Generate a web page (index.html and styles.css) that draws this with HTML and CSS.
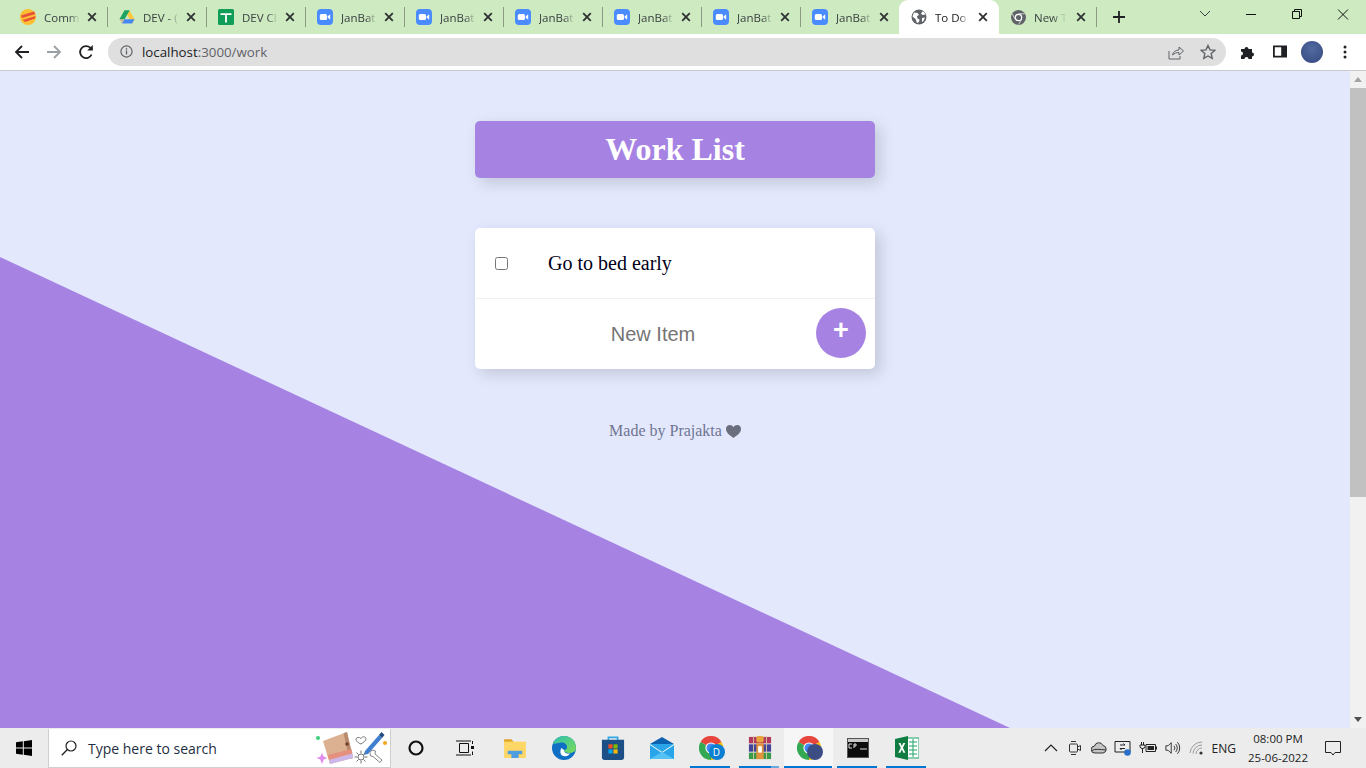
FILE: index.html
```html
<!DOCTYPE html>
<html lang="en">
<head>
<meta charset="utf-8">
<title>To Do List</title>
<link rel="stylesheet" href="styles.css">
</head>
<body>
<svg class="defs" width="0" height="0" aria-hidden="true">
  <symbol id="zoom" viewBox="0 0 16 16">
    <rect width="16" height="16" rx="4" fill="#4a8cff"/>
    <rect x="2.8" y="5" width="7.2" height="6" rx="1.5" fill="#fff"/>
    <path d="M10.6 7.4 13.2 5.3v5.4l-2.6-2.1z" fill="#fff"/>
  </symbol>
  <symbol id="x" viewBox="0 0 10 10">
    <path d="M1.2 1.2 8.8 8.8M8.8 1.2 1.2 8.8" stroke="#2f3133" stroke-width="1.8" fill="none"/>
  </symbol>
  <symbol id="chrome" viewBox="0 0 32 32">
    <path d="M16 16 2.1 8A16 16 0 0 1 29.9 8z" fill="#e8453c"/>
    <path d="M16 16 2.1 8A16 16 0 0 0 16 32z" fill="#34a853"/>
    <path d="M16 16 16 32A16 16 0 0 0 29.9 8z" fill="#fbbc05"/>
    <circle cx="16" cy="16" r="7.5" fill="#fff"/>
    <circle cx="16" cy="16" r="6" fill="#4285f4"/>
  </symbol>
</svg>

<div class="window">
  <header class="tabstrip">
    <div class="tab">
      <svg class="fav" viewBox="0 0 16 16"><circle cx="8" cy="8" r="8" fill="#fbbf33"/><path d="M1 6.5 14 2.5l1.4 2.6L2 9z" fill="#e8503a"/><path d="M2.6 11 15.6 7l-.6 2.6L5 13z" fill="#e8503a"/></svg>
      <span class="tab-title">Comm</span>
      <svg class="tab-x"><use href="#x"/></svg>
      <i class="tab-sep"></i>
    </div>
    <div class="tab">
      <svg class="fav" viewBox="0 0 16 16"><path d="M5.4 1.5h5.2L5.6 10.3H0.4z" fill="#1ea362"/><path d="M10.6 1.5 15.6 10.3l-2.6 4.3L8 5.8z" fill="#ffc93f"/><path d="M3 14.6 5.6 10.3h10L13 14.6z" fill="#4587f4"/><path d="M5.4 1.5h5.2L8 5.8z" fill="#1ea362"/><path d="M0.4 10.3h5.2L3 14.6z" fill="#e0402f" opacity=".25"/></svg>
      <span class="tab-title">DEV - (</span>
      <svg class="tab-x"><use href="#x"/></svg>
      <i class="tab-sep"></i>
    </div>
    <div class="tab">
      <svg class="fav" viewBox="0 0 16 16"><rect width="16" height="16" rx="1.5" fill="#0f9d58"/><path d="M2.500 4.200h11v1.700H8.900v7.600H7.100V5.900H2.500z" fill="#fff"/></svg>
      <span class="tab-title">DEV Cl</span>
      <svg class="tab-x"><use href="#x"/></svg>
      <i class="tab-sep"></i>
    </div>
    <div class="tab"><svg class="fav"><use href="#zoom"/></svg><span class="tab-title">JanBat</span><svg class="tab-x"><use href="#x"/></svg><i class="tab-sep"></i></div>
    <div class="tab"><svg class="fav"><use href="#zoom"/></svg><span class="tab-title">JanBat</span><svg class="tab-x"><use href="#x"/></svg><i class="tab-sep"></i></div>
    <div class="tab"><svg class="fav"><use href="#zoom"/></svg><span class="tab-title">JanBat</span><svg class="tab-x"><use href="#x"/></svg><i class="tab-sep"></i></div>
    <div class="tab"><svg class="fav"><use href="#zoom"/></svg><span class="tab-title">JanBat</span><svg class="tab-x"><use href="#x"/></svg><i class="tab-sep"></i></div>
    <div class="tab"><svg class="fav"><use href="#zoom"/></svg><span class="tab-title">JanBat</span><svg class="tab-x"><use href="#x"/></svg><i class="tab-sep"></i></div>
    <div class="tab"><svg class="fav"><use href="#zoom"/></svg><span class="tab-title">JanBat</span><svg class="tab-x"><use href="#x"/></svg></div>
    <div class="tab tab-active">
      <svg class="fav" viewBox="0 0 16 16"><circle cx="8" cy="8" r="7.5" fill="#5f6368"/><path d="M3 3.5 6.5 4 8 6 6 7 6.5 9.5 8.5 10.5 8 13 6 14 4.5 10 1.5 7.5zM9.5 1.5l2 1L10 4.5 11.5 6l3-.5L13 3zM11 9l3-.5-1.5 3.5L11 13z" fill="#fff"/></svg>
      <span class="tab-title">To Do</span>
      <svg class="tab-x"><use href="#x"/></svg>
    </div>
    <div class="tab tab-new">
      <svg class="fav" viewBox="0 0 32 32"><circle cx="16" cy="16" r="16" fill="#5f6368"/><circle cx="16" cy="16" r="8" fill="#fff"/><circle cx="16" cy="16" r="5.5" fill="#5f6368"/><path d="M16 8h13M9 20 2.5 8M22.5 20 16 31" stroke="#fff" stroke-width="1.5"/></svg>
      <span class="tab-title">New Ta</span>
      <svg class="tab-x"><use href="#x"/></svg>
      <i class="tab-sep"></i>
    </div>
    <svg class="newtab" viewBox="0 0 12 12"><path d="M6 0v12M0 6h12" stroke="#202124" stroke-width="1.8"/></svg>
    <div class="winctrls">
      <svg class="winbtn" viewBox="0 0 46 34"><path d="m18 11 5 5 5-5" stroke="#3c4043" fill="none" stroke-width="1"/></svg>
      <svg class="winbtn" viewBox="0 0 46 34"><path d="M18 14.500h10" stroke="#111" fill="none"/></svg>
      <svg class="winbtn" viewBox="0 0 46 34"><path d="M18.500 11.500h7v7h-7zM20.500 11.500v-2h7v7h-2" stroke="#111" fill="none"/></svg>
      <svg class="winbtn" viewBox="0 0 46 34"><path d="m18 9.500 10 10m0-10-10 10" stroke="#111" fill="none"/></svg>
    </div>
  </header>

  <nav class="toolbar">
    <svg class="navbtn" viewBox="0 0 16 16"><path d="M15 8H2M8 2 2 8l6 6" stroke="#202124" stroke-width="1.8" fill="none"/></svg>
    <svg class="navbtn" viewBox="0 0 16 16"><path d="M1 8h13M8 2l6 6-6 6" stroke="#9aa0a6" stroke-width="1.8" fill="none"/></svg>
    <svg class="navbtn" viewBox="0 0 16 16"><path d="M13.600 10.500A6 6 0 1 1 12.200 3.700L14 5.500" stroke="#202124" stroke-width="1.800" fill="none"/><path d="M14.800 1v5.600H9.200z" fill="#202124"/></svg>
    <div class="omnibox">
      <svg class="omni-info" viewBox="0 0 14 14"><circle cx="7" cy="7" r="6" stroke="#5f6368" stroke-width="1.300" fill="none"/><path d="M7 6v4.200M7 3.600v1.400" stroke="#5f6368" stroke-width="1.400"/></svg>
      <span class="url">localhost<span class="url-rest">:3000/work</span></span>
      <svg class="omni-action" viewBox="0 0 16 16"><path d="M1 7v8h11v-3" stroke="#5f6368" fill="none"/><path d="M4.500 11c.7-3.500 3.500-5 6.500-5V3l4.500 4-4.500 4V8.500C8.500 8.500 6.500 9.200 4.500 11z" stroke="#5f6368" fill="none"/></svg>
      <svg class="omni-action" viewBox="0 0 16 16"><path d="m8 1.500 2 4.400 4.800.5-3.600 3.200 1 4.700L8 12l-4.200 2.300 1-4.700-3.600-3.200 4.800-.5z" stroke="#5f6368" stroke-width="1.400" fill="none"/></svg>
    </div>
    <svg class="ext" viewBox="0 0 16 16"><path d="M1 5h3.500a2 2 0 1 1 4 0H12v3.500a2 2 0 1 1 0 4V15H8.500a2 2 0 1 0-4 0H1v-3.500a2 2 0 1 0 0-4z" fill="#202124"/></svg>
    <svg class="side" viewBox="0 0 14 12"><path fill-rule="evenodd" d="M0 0h14v12H0zM1.800 1.800v8.400h6.400V1.800z" fill="#202124"/></svg>
    <span class="avatar"></span>
    <svg class="kebab" viewBox="0 0 4 14"><circle cx="2" cy="2" r="1.500"/><circle cx="2" cy="7" r="1.500"/><circle cx="2" cy="12" r="1.500"/></svg>
  </nav>

  <div class="viewport">
    <main class="page">
      <div class="wedge"></div>
      <div class="heading"><h1>Work List</h1></div>
      <section class="card">
        <div class="item">
          <input class="check" type="checkbox">
          <p>Go to bed early</p>
        </div>
        <form class="add">
          <input class="add-input" type="text" placeholder="New Item">
          <button class="add-btn" type="button">+</button>
        </form>
      </section>
      <footer class="credit">Made by Prajakta <svg class="heart" viewBox="0 0 14 12"><path d="M7 12C3 9 0 7 0 3.600 0 1.500 1.600 0 3.500 0 5 0 6.300.8 7 2 7.700.8 9 0 10.500 0 12.400 0 14 1.500 14 3.600 14 7 11 9 7 12z" fill="#6b6e7c"/></svg></footer>
    </main>
    <aside class="scrollbar">
      <svg class="sb-arrow" viewBox="0 0 16 17"><path d="m4 11 4-5 4 5z" fill="#a3a3a3"/></svg>
      <div class="sb-thumb"></div>
      <svg class="sb-arrow sb-arrow-end" viewBox="0 0 16 17"><path d="m4 6 4 5 4-5z" fill="#505050"/></svg>
    </aside>
  </div>

  <footer class="taskbar">
    <div class="start"><svg class="winlogo" viewBox="0 0 16 16"><path d="M0 2.300 6.800 1.300v6.200H0zM7.800 1.200 16 0v7.500H7.800zM0 8.500h6.800v6.200L0 13.700zM7.800 8.500H16V16l-8.200-1.200z" fill="#000"/></svg></div>
    <div class="search">
      <svg class="search-ico" viewBox="0 0 16 16"><circle cx="10" cy="6" r="5" stroke="#222" stroke-width="1.200" fill="none"/><path d="M6.400 9.600.8 15.200" stroke="#222" stroke-width="1.400"/></svg>
      <span class="search-text">Type here to search</span>
      <svg class="sticker" viewBox="0 0 72 36">
        <circle cx="2" cy="8" r="2" fill="#3ecf7a"/>
        <path d="m6 23 1.800 3.800 3.700 1.200-3.700 1.500L6 34l-1.800-4.500L.5 28l3.700-1.200z" fill="#e58cf0"/>
        <path d="M7 11 31 2l6 26-23 6z" fill="#dcb191"/>
        <path d="M27.500 3.300 31 2l6 26-3.500.9z" fill="#b98a6d"/>
        <path d="m11.700 25 23.800-6 1 4.500L13 30z" fill="#e58f7e"/>
        <path d="m13 30 23.500-6.500.5 4.500-23 6z" fill="#cdb6ea"/>
        <circle cx="31" cy="14" r="1.800" fill="#6e3f2c"/>
        <path d="M45 8.500c1.500-2.500 4.500-2 5 0 .2 2-2.500 4-5 5.500-2.500-1-5.500-3-5-5 .6-2 3.500-2 5-.5z" fill="none" stroke="#777"/>
        <path d="M49 21 63 5l3 3-14 16-4.500 1z" fill="#3f7fd0"/>
        <path d="m63 5 2.500-3 3 3-2.500 3z" fill="#234a80"/>
        <circle cx="69" cy="13" r="2" fill="#f5a623"/>
        <circle cx="45" cy="27" r="3" fill="none" stroke="#777"/>
        <path d="M45 20.500v3M45 30.500v3M38.500 27h3M48.500 27h3M40.500 22.500l2 2M47.500 29.500l2 2M49.500 22.500l-2 2M42.500 29.500l-2 2" stroke="#777"/>
        <path d="m56 20 3.500 1-.5 3 7 6-2 2.500-7-6-2.500-.5-.5-3.500z" fill="none" stroke="#888"/>
      </svg>
    </div>
    <div class="tb-item"><svg class="cortana" viewBox="0 0 16 16"><circle cx="8" cy="8" r="6.500" stroke="#111" stroke-width="2.200" fill="none"/></svg></div>
    <div class="tb-item tb-item-gap"><svg class="tb-ico" viewBox="0 0 18 16"><path d="M3.500 3.500h9v9h-9zM0 1h15M0 15h15M16.500 1v3M16.500 11.500V15" stroke="#111" fill="none"/><rect x="15" y="6" width="3" height="3" fill="#111"/></svg></div>
    <div class="tb-item"><svg class="tb-ico-lg" viewBox="0 0 24 22"><path d="M0 1.500h8l2 2h0V8H0z" fill="#e0a526"/><path d="M0 4h24v18H0z" fill="#ffd766"/><path d="M4 14h16v4h-4v4H8v-4H4z" fill="#4f9ee0"/></svg></div>
    <div class="tb-item"><svg class="tb-ico-xl" viewBox="0 0 24 24"><defs><linearGradient id="edgeA" x1="0" y1="0" x2="1" y2="1"><stop offset="0" stop-color="#2cc0b0"/><stop offset="1" stop-color="#7bdc55"/></linearGradient></defs><circle cx="12" cy="12" r="12" fill="#0e6fc5"/><path d="M1 8C3 2 8 0 12 0c7 0 12 5 12 12 0 3-3 5-7 5-3 0-5-1-5-3 2 0 3-1 3-3 0-3-3-5-6-4.500C5 7 1.500 8 1 8z" fill="url(#edgeA)"/><path d="M12 14c0 3 3 4 6 3.500-2 3-6 3.500-8 2C8 18 8 14 9.500 12z" fill="#fff"/></svg></div>
    <div class="tb-item"><svg class="tb-ico-xl" viewBox="0 0 24 26"><path d="M7 5V1.500h10V5" stroke="#2ea8e6" stroke-width="1.800" fill="none"/><path d="M0 4h24v19a3 3 0 0 1-3 3H3a3 3 0 0 1-3-3z" fill="#1b4f86"/><rect x="7" y="9" width="4.500" height="4.500" fill="#f25022"/><rect x="12.500" y="9" width="4.500" height="4.500" fill="#7fba00"/><rect x="7" y="14.500" width="4.500" height="4.500" fill="#00a4ef"/><rect x="12.500" y="14.500" width="4.500" height="4.500" fill="#ffb900"/></svg></div>
    <div class="tb-item"><svg class="tb-ico-xl" viewBox="0 0 24 22"><path d="M0 7 12 0l12 7v1H0z" fill="#0c62ae"/><path d="M0 7h24v15H0z" fill="#2aa5ea"/><path d="M0 7l12 8 12-8v1L12 16 0 8z" fill="#fff"/><path d="M24 22 12 15 0 22z" fill="#55c1f5"/></svg></div>
    <div class="tb-item tb-run">
      <span class="tb-stack"><svg class="tb-ico-xl"><use href="#chrome"/></svg><span class="badge badge-d">D</span></span>
    </div>
    <div class="tb-item tb-run tb-run-multi">
      <svg class="tb-ico-xl" viewBox="0 0 24 26"><rect y="1" width="24" height="7" fill="#b23a5e"/><rect y="9" width="24" height="8" fill="#42449a"/><rect y="18" width="24" height="7" fill="#3a9a4a"/><path d="M5 0v26M19 0v26" stroke="#d8c9a0"/><rect x="8" y="0" width="8" height="7" rx="2" fill="#e8a63a"/><rect x="8" y="8" width="8" height="17" fill="#e0933a"/><rect x="10" y="11" width="4" height="7" fill="#fff"/></svg>
    </div>
    <div class="tb-item tb-run tb-active">
      <span class="tb-stack"><svg class="tb-ico-xl"><use href="#chrome"/></svg><span class="badge badge-user"></span></span>
    </div>
    <div class="tb-item tb-run">
      <span class="console"><span class="console-bar"></span><svg class="console-txt" viewBox="0 0 20 8"><path d="M1 1h3M1 1v4h3M6 1v4M6 1h2v2H6M10 1h0M10 4h0M12 6h7" stroke="#ddd" fill="none"/></svg></span>
    </div>
    <div class="tb-item tb-run">
      <svg class="tb-ico-xl" viewBox="0 0 24 24"><path d="M9 2h15v20H9z" fill="#fff" stroke="#21a366" stroke-width="1"/><path d="M14 6h8M14 10h8M14 14h8M14 18h8M18 3v18" stroke="#21a366"/><path d="M0 3l13-3v24L0 21z" fill="#107c41"/><path d="m3.500 7 2 0 1.300 3 1.500-3h2l-2.400 4.800 2.500 5h-2l-1.600-3.300-1.500 3.300h-2l2.500-5z" fill="#fff"/></svg>
    </div>
    <div class="tray">
      <svg class="tray-ico" viewBox="0 0 16 16"><path d="m2 11 6-6 6 6" stroke="#222" stroke-width="1.200" fill="none"/></svg>
      <svg class="tray-ico" viewBox="0 0 16 16"><path d="M3.500 4h6a1 1 0 0 1 1 1v6a1 1 0 0 1-1 1h-6a1 1 0 0 1-1-1V5a1 1 0 0 1 1-1zM10.500 7l3-1.500v5l-3-1.500M4 1.500h5M4 14.500h5" stroke="#333" fill="none"/></svg>
      <svg class="tray-ico" viewBox="0 0 16 16"><path d="M4 13a3.500 3.500 0 0 1-.5-7 4.500 4.500 0 0 1 8.500-.5A3.800 3.800 0 0 1 12 13z" fill="#c4c4c4" stroke="#333"/><path d="M1 10.500c3-2 8-1 14-.5" stroke="#333" fill="none"/></svg>
      <svg class="tray-ico-wide" viewBox="0 0 18 18"><path d="M1 2.500h15V13H1z" stroke="#222" fill="none"/><path d="M6 6h5l-1.500-1.500M11 9.500H6L7.500 11" stroke="#222" fill="none"/><circle cx="13.500" cy="13.500" r="3.300" fill="#2a6fcb"/></svg>
      <svg class="tray-ico-wide" viewBox="0 0 18 16"><path d="M7 4.500h9.500v7H7z" stroke="#222" fill="none"/><rect x="8.500" y="6" width="6.500" height="4" fill="#222"/><rect x="17" y="6.500" width="1" height="3" fill="#222"/><path d="M1 5h5M2.500 2v3M4.500 2v3M3.500 8v5" stroke="#222"/><path d="M1 5v1.500a2.500 2 0 0 0 5 0V5" stroke="#222" fill="none"/></svg>
      <svg class="tray-ico" viewBox="0 0 18 16"><path d="M1 5.500h2.500L7 2v12l-3.500-3.500H1zM10 5.500a3.500 3.500 0 0 1 0 5M12 3.500a6.500 6.500 0 0 1 0 9M14 1.500a9.500 9.500 0 0 1 0 13" stroke="#222" fill="none"/></svg>
      <svg class="tray-ico" viewBox="0 0 16 16"><path d="M1 13A12 12 0 0 1 13 2M4 13.500A9 9 0 0 1 13 5M7 14a6 6 0 0 1 6-6" stroke="#999" fill="none"/><circle cx="12" cy="13" r="1.600" fill="#333"/></svg>
      <span class="tray-lang">ENG</span>
      <span class="clock"><span>08:00 PM</span><span>25-06-2022</span></span>
      <svg class="notify" viewBox="0 0 16 16"><path d="M.5 1.500h15V12.500H10l-2 2.500-2-2.500H.5z" stroke="#222" fill="none"/></svg>
    </div>
  </footer>
</div>
</body>
</html>
```
FILE: styles.css
```css
* { box-sizing: border-box; }
html, body { margin: 0; height: 100%; overflow: hidden; }
body { font-family: "Open Sans", "Liberation Sans", sans-serif; }
.defs { position: absolute; }
.window { width: 1366px; height: 768px; display: flex; flex-direction: column; }

/* tab strip */
.tabstrip { height: 34px; flex: none; background: #cdeac0; display: flex; align-items: center; padding-left: 8px; }
.tab { width: 99px; height: 34px; flex: none; display: flex; align-items: center; padding-left: 12px; position: relative; }
.fav { width: 16px; height: 16px; flex: none; }
.tab-title { width: 36px; flex: none; margin-left: 8px; font-size: 11.500px; color: #3c4043; white-space: nowrap; overflow: hidden; -webkit-mask-image: linear-gradient(90deg, #000 70%, transparent 100%); mask-image: linear-gradient(90deg, #000 70%, transparent 100%); }
.tab-x { width: 10px; height: 10px; margin-left: 7px; flex: none; }
.tab-sep { width: 1px; height: 20px; background: #8a9a85; margin-left: 10px; flex: none; }
.tab-active { width: 100px; background: #fff; border-radius: 9px 9px 0 0; }
.tab-active .tab-title { width: 34px; color: #202124; }
.tab-active .tab-x { margin-left: 9px; }
.tab-new { width: 98px; }
.tab-new .fav { width: 15px; height: 15px; }
.tab-new .tab-title { width: 40px; -webkit-mask-image: linear-gradient(90deg, #000 45%, transparent 82%); mask-image: linear-gradient(90deg, #000 45%, transparent 82%); }
.tab-new .tab-x { margin-left: 2px; }
.newtab { width: 12px; height: 12px; margin-left: 16px; flex: none; }
.winctrls { margin-left: auto; display: flex; }
.winbtn { width: 46px; height: 34px; flex: none; }

/* toolbar */
.toolbar { height: 37px; flex: none; background: #fff; border-bottom: 1px solid #c9c9cf; display: flex; align-items: center; padding: 0 0 1px 14px; }
.navbtn { width: 16px; height: 16px; margin-right: 16px; flex: none; }
.omnibox { width: 1118px; height: 28px; margin-left: -2px; border-radius: 14px; background: #dfdfdf; display: flex; align-items: center; padding-left: 12px; flex: none; }
.omni-info { width: 13px; height: 13px; flex: none; }
.url { margin-left: 9px; font-size: 13.300px; color: #202124; }
.url-rest { color: #5f6368; }
.omni-action { width: 16px; height: 16px; flex: none; }
.omni-action:nth-of-type(2) { margin-left: auto; }
.omni-action:last-child { margin-left: 16px; margin-right: 10px; }
.ext { width: 16px; height: 16px; margin-left: 14px; flex: none; }
.side { width: 14px; height: 13px; margin-left: 17px; flex: none; }
.avatar { width: 22px; height: 22px; margin-left: 14px; border-radius: 50%; background: radial-gradient(circle at 50% 35%, #506a9f, #37497f); flex: none; }
.kebab { width: 4px; height: 14px; margin-left: 20px; fill: #202124; flex: none; }

/* page */
.viewport { flex: 1; min-height: 0; display: flex; }
.page { flex: 1; position: relative; background: #e3e8fc; display: flex; flex-direction: column; align-items: center; padding-top: 50px; overflow: hidden; }
.wedge { position: absolute; left: 0; top: 0; width: 100%; height: 100%; background: #a683e3; clip-path: polygon(0 186px, 1010px 657px, 0 657px); }
.heading { width: 400px; height: 57px; background: #a683e3; border-radius: 5px; box-shadow: 5px 5px 15px rgba(0, 0, 0, .15); text-align: center; position: relative; }
.heading h1 { margin: 0; font: bold 32px/57px "Liberation Serif", serif; color: #fff; }
.card { width: 400px; height: 141px; margin-top: 50px; background: #fff; border-radius: 5px; box-shadow: 5px 5px 15px rgba(0, 0, 0, .15); position: relative; }
.item { height: 71px; display: flex; align-items: center; border-bottom: 1px solid #f1f1f1; padding-left: 20px; }
.check { width: 13px; height: 13px; margin: 0 40px 0 0; flex: none; }
.item p { margin: 0; font: 20px "Liberation Serif", serif; color: #00001a; }
.add { height: 70px; display: flex; align-items: center; position: relative; }
.add-input { width: 356px; height: 60px; border: 0; outline: 0; background: transparent; font: 20px "Liberation Sans", sans-serif; text-align: center; padding: 0; margin-top: 1px; }
.add-input::placeholder { color: #757575; opacity: 1; }
.add-btn { position: absolute; left: 341px; top: 9px; width: 50px; height: 50px; border: 0; border-radius: 50%; background: #a683e3; color: #fff; font: bold 27px/40px "Liberation Sans", sans-serif; padding: 0 0 6px; }
.credit { margin-top: 52px; font: 16px/20px "Liberation Serif", serif; color: #6f7592; position: relative; display: flex; align-items: center; gap: 4px; }
.heart { width: 15px; height: 13px; }

/* scrollbar */
.scrollbar { width: 16px; flex: none; background: #f1f1f1; display: flex; flex-direction: column; }
.sb-arrow { width: 16px; height: 17px; flex: none; }
.sb-arrow-end { margin-top: auto; }
.sb-thumb { height: 409px; background: #c1c1c1; flex: none; }

/* taskbar */
.taskbar { height: 40px; flex: none; background: #ececec; display: flex; align-items: stretch; }
.start { width: 48px; display: flex; align-items: center; justify-content: center; flex: none; }
.winlogo { width: 16px; height: 16px; }
.search { width: 343px; margin-top: 1px; background: #fff; border: 1px solid #cfcfcf; border-top: 0; display: flex; align-items: center; padding-left: 12px; flex: none; }
.search-ico { width: 16px; height: 16px; flex: none; }
.search-text { margin-left: 11px; font-size: 14px; color: #1f2f3f; white-space: nowrap; }
.sticker { width: 72px; height: 36px; margin-left: auto; margin-right: 2px; flex: none; }
.tb-item { width: 49px; flex: none; display: flex; align-items: center; justify-content: center; position: relative; }
.tb-item-gap { margin-right: 1px; }
.tb-active { background: #f6f6f6; }
.tb-run::after { content: ""; position: absolute; left: 4px; right: 5px; bottom: 0; height: 2px; background: #0078d4; }
.tb-active::after { left: 0; right: 1px; }
.tb-run-multi::after { background: linear-gradient(90deg, #0078d4 80%, #6aa9de 80%); }
.cortana { width: 16px; height: 16px; }
.tb-ico { width: 18px; height: 16px; }
.tb-ico-lg { width: 22px; height: 20px; }
.tb-ico-xl { width: 24px; height: 24px; display: block; }
.tb-stack { position: relative; display: block; width: 24px; height: 24px; }
.badge { position: absolute; left: 10px; top: 8px; width: 16px; height: 16px; border-radius: 50%; }
.badge-d { background: #0b7fd1; color: #fff; font-size: 10px; line-height: 16px; text-align: center; }
.badge-user { background: #3c4d84; }
.console { width: 22px; height: 20px; background: #0c0c0c; border: 1px solid #555; display: block; }
.console-bar { display: block; height: 3px; background: #c9c9c9; }
.console-txt { display: block; width: 20px; height: 8px; margin-top: 1px; }
.tray { margin-left: auto; display: flex; align-items: center; padding-right: 25px; color: #222; }
.tray-ico { width: 16px; height: 16px; margin-left: 8px; flex: none; }
.tray-ico-wide { width: 18px; height: 18px; margin-left: 7px; flex: none; }
.tray-lang { margin-left: 7px; font-size: 12px; }
.clock { width: 78px; margin-left: 3px; display: flex; flex-direction: column; align-items: center; font-size: 11.500px; line-height: 19px; }
.notify { width: 16px; height: 16px; margin-left: 8px; flex: none; }
```
